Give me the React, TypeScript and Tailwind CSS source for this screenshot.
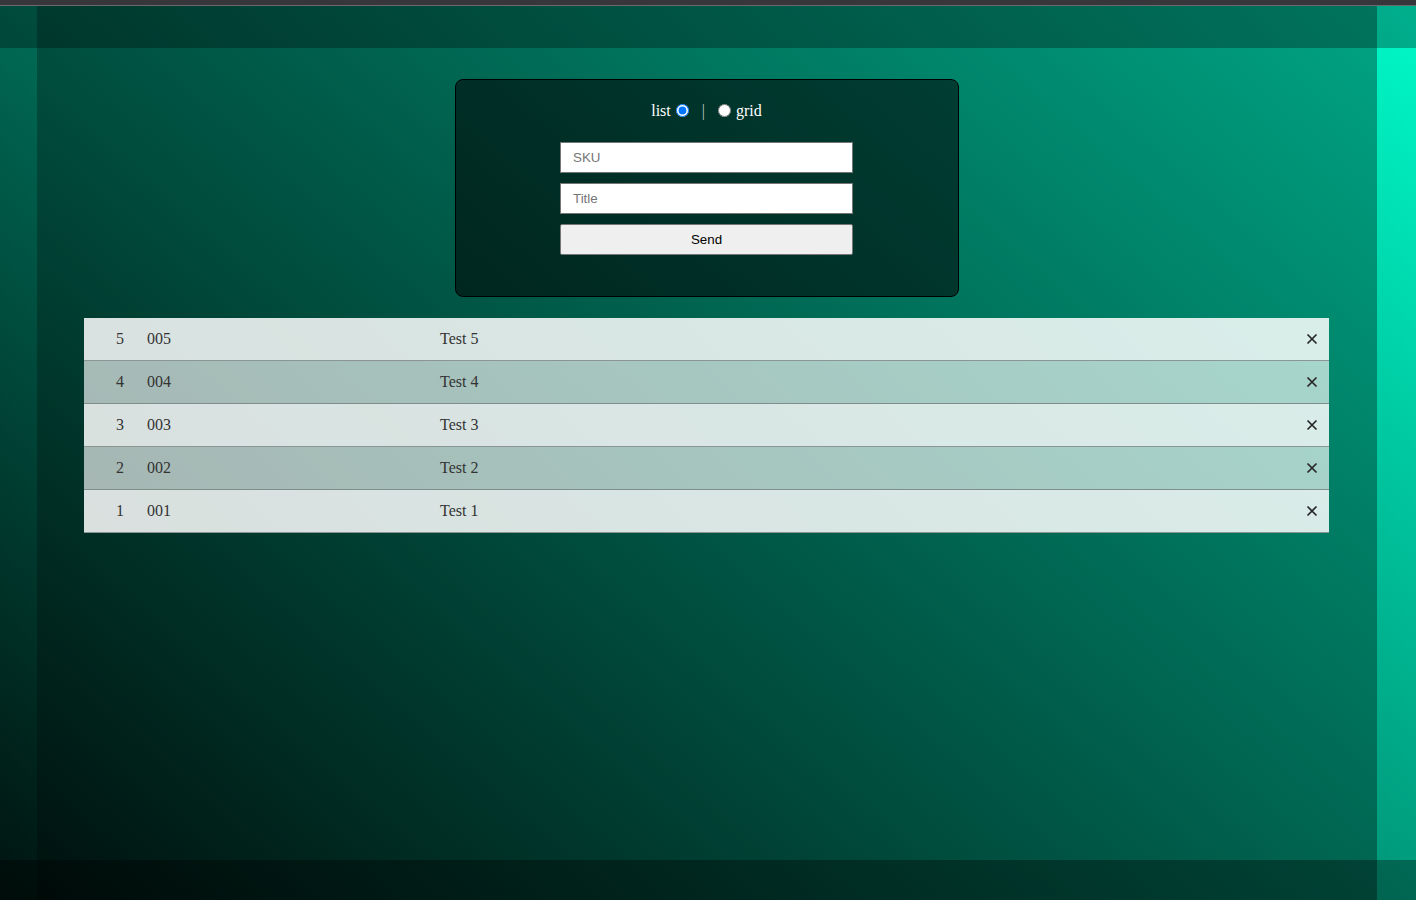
import React from "react";

const rows = [
  { id: 5, sku: "005", title: "Test 5" },
  { id: 4, sku: "004", title: "Test 4" },
  { id: 3, sku: "003", title: "Test 3" },
  { id: 2, sku: "002", title: "Test 2" },
  { id: 1, sku: "001", title: "Test 1" },
];

function XIcon() {
  return (
    <svg width="12" height="12" viewBox="0 0 12 12" aria-hidden="true">
      <path d="M1.5 1.5 L10.5 10.5 M10.5 1.5 L1.5 10.5" stroke="#262626" strokeWidth="1.7" strokeLinecap="butt" />
    </svg>
  );
}

export default function App() {
  return (
    <div className="flex h-[900px] w-[1416px] flex-col overflow-hidden font-['Liberation_Serif',serif]">
      <div className="h-[6px] shrink-0 border-b border-[#6a6a6e] bg-[#37373b]" />
      <div className="grid flex-1 grid-cols-[37px_1340px_39px] grid-rows-[42px_812px_40px]">
        <div className="bg-fixed bg-[linear-gradient(41deg,#000d0a,#009f7f)]" />
        <div className="bg-fixed bg-[linear-gradient(41deg,#000a08,#00755e)]" />
        <div className="bg-fixed bg-[linear-gradient(41deg,#000f0c,#00af8d)]" />

        <div className="bg-fixed bg-[linear-gradient(41deg,#00130f,#00e1b5)]" />
        <main className="flex flex-col items-center bg-fixed bg-[linear-gradient(41deg,#000e0b,#00a786)] pl-[47px] pr-[48px] pt-[31px]">
          <section className="flex w-[504px] flex-col items-center rounded-lg border border-black bg-[linear-gradient(41deg,#00261f,#003d32)] pb-[41px] pt-[21px]">
            <div className="flex h-[20px] items-center text-[16px] text-white">
              <span>list</span>
              <input type="radio" name="view" defaultChecked className="ml-[5px] mt-[-2px] h-[13px] w-[13px]" />
              <span className="ml-[13px] text-[#b8c4c1]">|</span>
              <input type="radio" name="view" className="ml-[13px] mt-[-2px] h-[13px] w-[13px]" />
              <span className="ml-[5px]">grid</span>
            </div>
            <input
              placeholder="SKU"
              className="mt-[21px] h-[31px] w-[293px] border border-[#767676] bg-white pl-3 font-['Liberation_Sans',Arial,sans-serif] text-[13.333px] text-black outline-none placeholder:text-[#757575]"
            />
            <input
              placeholder="Title"
              className="mt-[10px] h-[31px] w-[293px] border border-[#767676] bg-white pl-3 font-['Liberation_Sans',Arial,sans-serif] text-[13.333px] text-black outline-none placeholder:text-[#757575]"
            />
            <button className="mt-[10px] h-[31px] w-[293px] rounded-[2px] border border-[#767676] bg-[#efefef] font-['Liberation_Sans',Arial,sans-serif] text-[13.333px] text-black">
              Send
            </button>
          </section>

          <ul className="mt-[21px] w-full">
            {rows.map((r, i) => (
              <li
                key={r.id}
                className={
                  i % 2 === 0
                    ? "flex h-[43px] items-center border-b border-[#8b9694] bg-white/85 text-[16px] text-[#333]"
                    : "flex h-[43px] items-center border-b border-[#7f8e8b] bg-white/65 text-[16px] text-[#333]"
                }
              >
                <span className="w-[63px] pl-[32px]">{r.id}</span>
                <span className="w-[293px]">{r.sku}</span>
                <span className="flex-1">{r.title}</span>
                <span className="mr-[11px] flex h-[12px] w-[12px] items-center justify-center">
                  <XIcon />
                </span>
              </li>
            ))}
          </ul>
        </main>
        <div className="bg-fixed bg-[linear-gradient(41deg,#001510,#00fac9)]" />

        <div className="bg-fixed bg-[linear-gradient(41deg,#000c09,#008e72)]" />
        <div className="bg-fixed bg-[linear-gradient(41deg,#000907,#006d57)]" />
        <div className="bg-fixed bg-[linear-gradient(41deg,#000e0b,#00a786)]" />
      </div>
    </div>
  );
}
